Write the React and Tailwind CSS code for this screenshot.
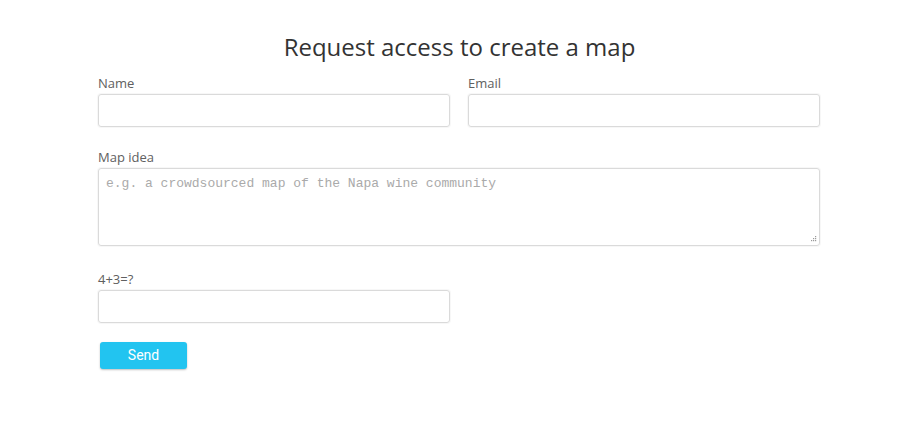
import React from 'react';

export default function App() {
    return (
        <div className="min-h-[423px] bg-white font-['Open_Sans',sans-serif]">
            <div className="w-[722px] ml-[98px] pt-[30px]">
                <h1 className="text-[24px] leading-[34px] text-[#333] text-center pl-[1px]">
                    Request access to create a map
                </h1>

                {/* Name / Email */}
                <div className="grid grid-cols-2 gap-[18px] mt-[10px]">
                    <Field label="Name" />
                    <Field label="Email" />
                </div>

                {/* Map idea */}
                <div className="mt-[21px]">
                    <label className="block text-[13px] leading-[18px] text-[#606060]">Map idea</label>
                    <div className="relative mt-[2px]">
                        <textarea
                            className="block w-full h-[78px] resize-none border border-[#dadada] rounded-[3px] px-[7px] py-[6px] text-[13px] leading-[18px] font-['Liberation_Mono',monospace] placeholder:text-[#aaa] shadow-[0_0_0_1px_rgba(0,0,0,0.03)] outline-none"
                            placeholder="e.g. a crowdsourced map of the Napa wine community"
                        />
                        {/* resize grip */}
                        <svg className="absolute right-[3px] bottom-[3px]" width="7" height="7" viewBox="0 0 7 7" fill="#9a9a9a">
                            <rect x="5" y="0" width="1.2" height="1.2" />
                            <rect x="3" y="2" width="1.2" height="1.2" />
                            <rect x="5" y="2" width="1.2" height="1.2" />
                            <rect x="1" y="4" width="1.2" height="1.2" />
                            <rect x="3" y="4" width="1.2" height="1.2" />
                            <rect x="5" y="4" width="1.2" height="1.2" />
                        </svg>
                    </div>
                </div>

                {/* Captcha */}
                <div className="mt-[24px] w-[352px]">
                    <Field label="4+3=?" />
                </div>

                <button className="mt-[19px] ml-[2px] w-[87px] h-[27px] bg-[#22c4f0] text-white text-[14px] rounded-[3px] font-['Roboto',sans-serif] shadow-[0_1px_2px_rgba(0,0,0,0.25)]">
                    Send
                </button>
            </div>
        </div>
    );
}

function Field({ label }) {
    return (
        <div>
            <label className="block text-[13px] leading-[18px] text-[#606060]">{label}</label>
            <input
                type="text"
                className="block mt-[2px] w-full h-[33px] border border-[#dadada] rounded-[3px] px-[7px] shadow-[0_0_0_1px_rgba(0,0,0,0.03)] outline-none"
            />
        </div>
    );
}
